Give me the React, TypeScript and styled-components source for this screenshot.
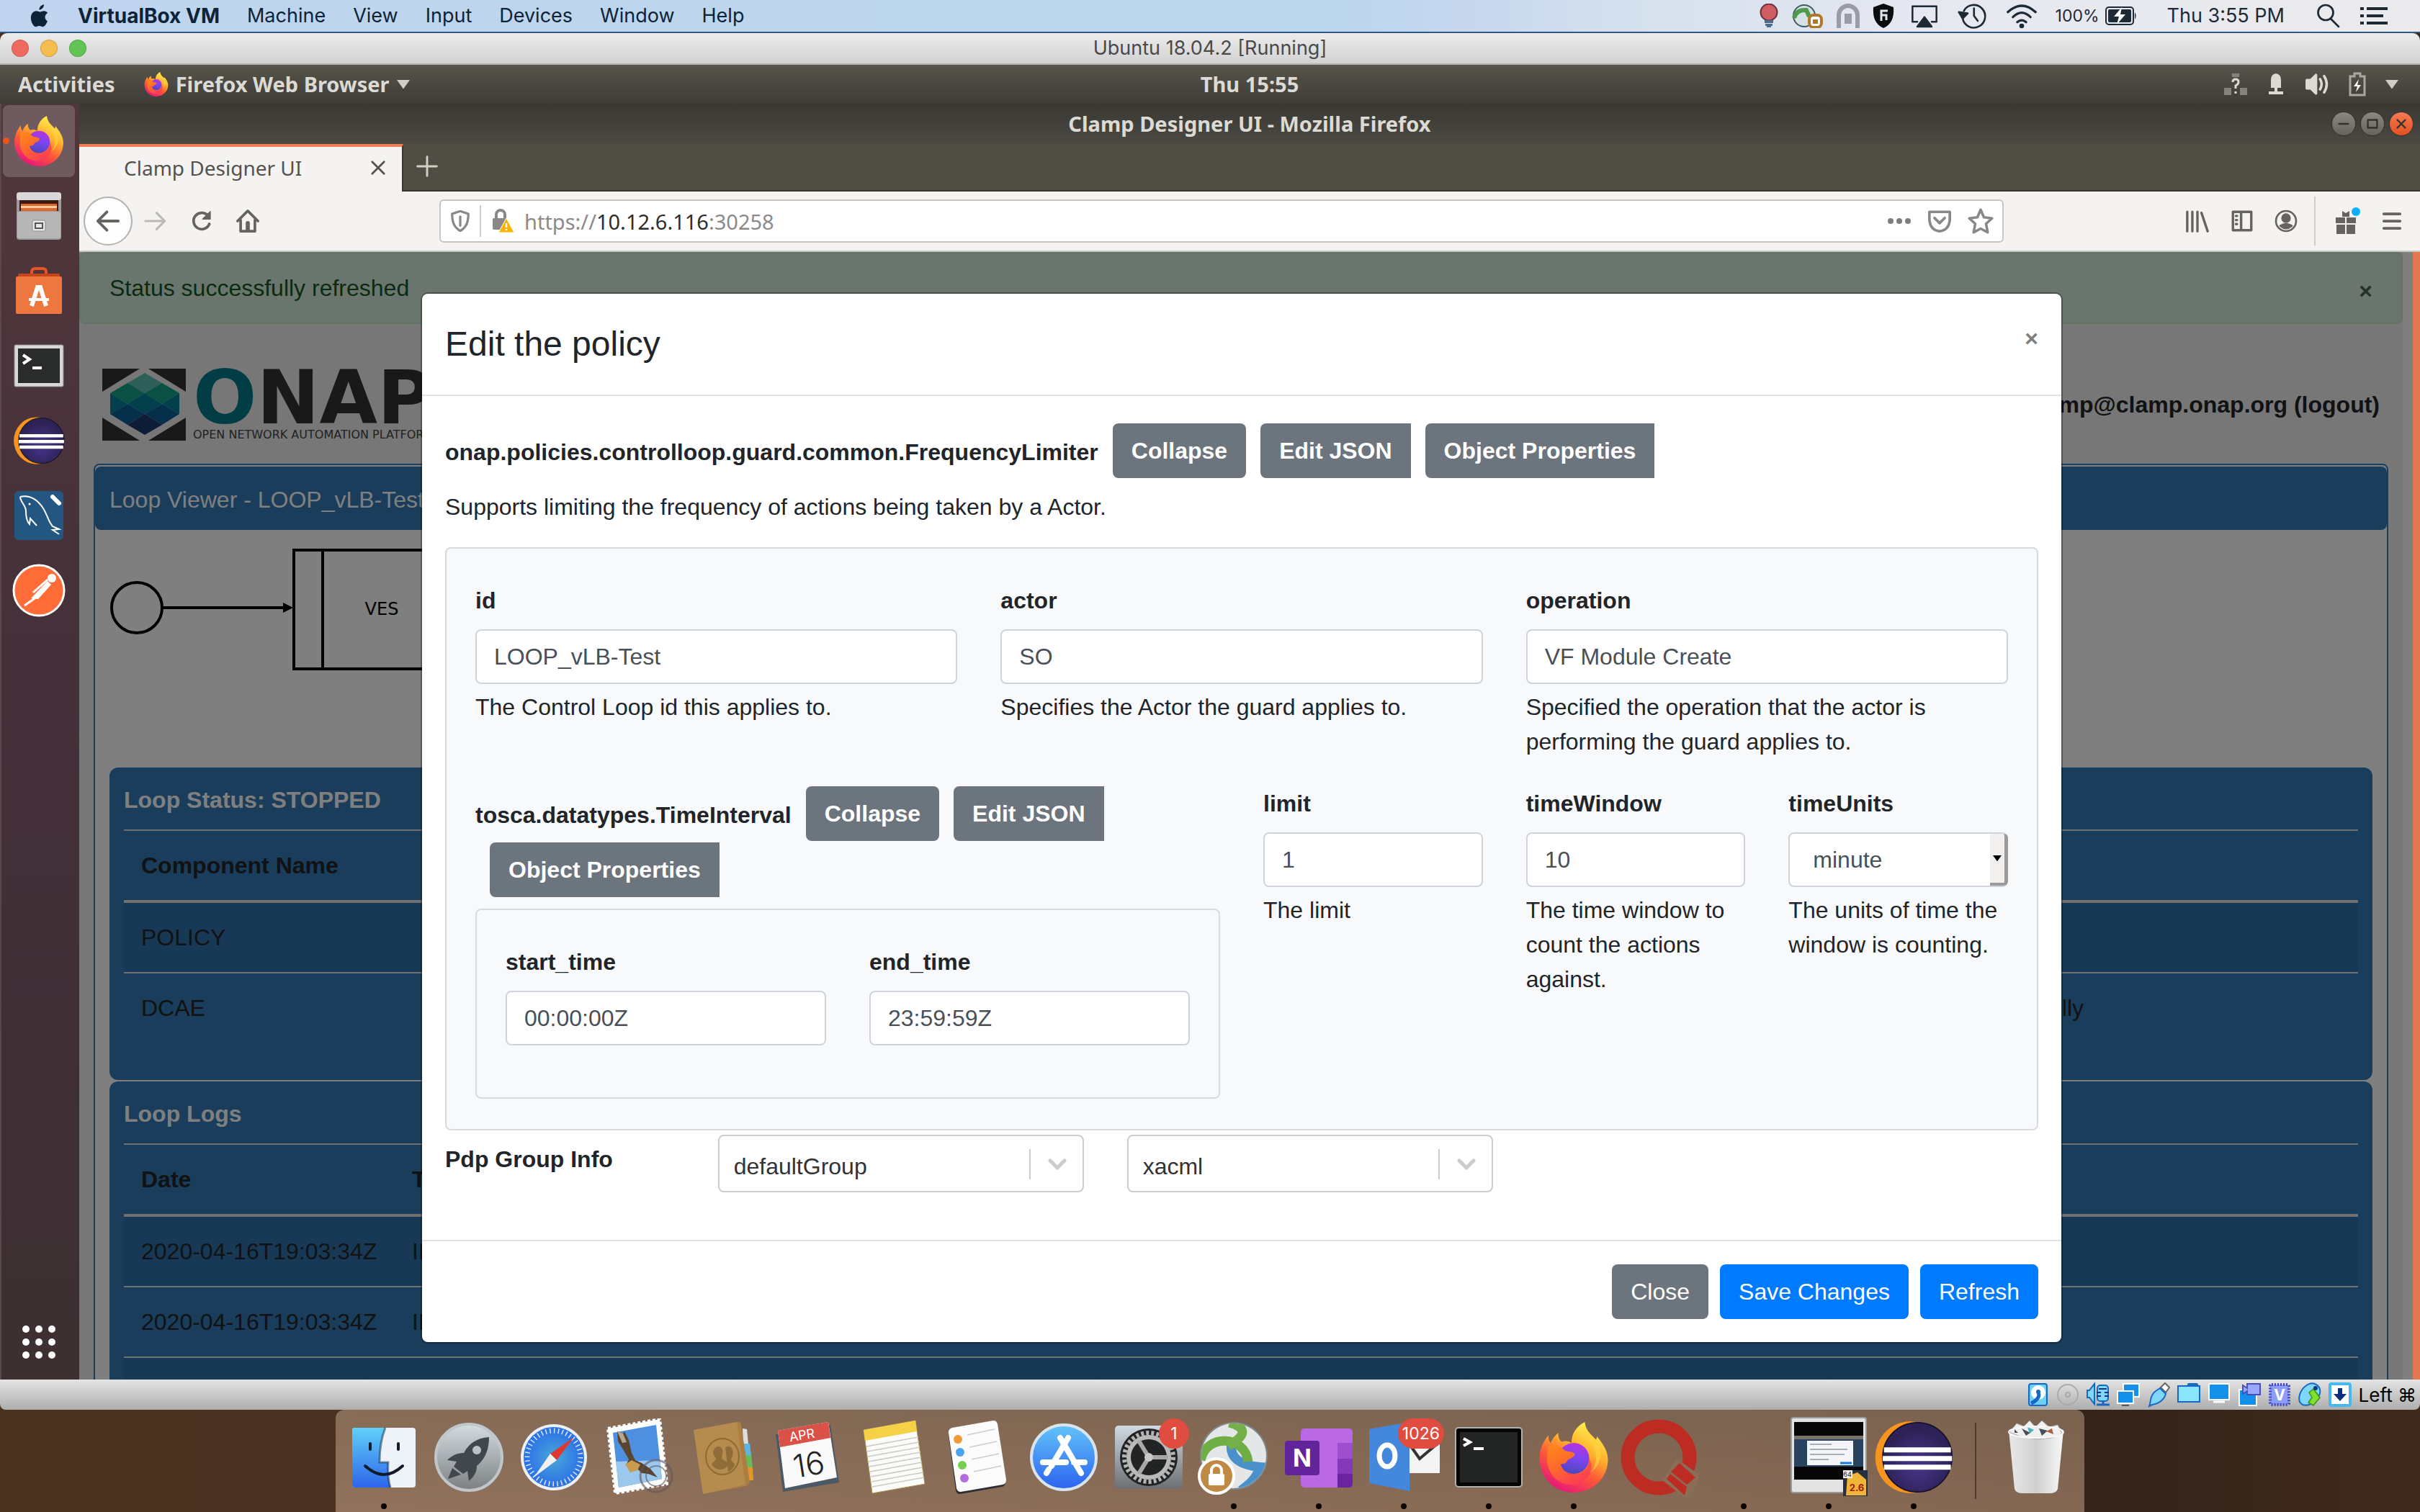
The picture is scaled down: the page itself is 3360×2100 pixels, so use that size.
import React from 'react';
import styled, { createGlobalStyle, css } from 'styled-components';

const ui = '"Liberation Sans", Arial, sans-serif';
const mac = 'Inter, Roboto, sans-serif';
const ubuntu = '"Noto Sans", "Open Sans", sans-serif';

const Global = createGlobalStyle`
  *, *::before, *::after { box-sizing: border-box; }
  body { margin: 0; background: #3a281b; }
  button, input, select { font: inherit; margin: 0; }
  svg { display: block; flex: none; }
`;

/* ---------- desktop ---------- */

const Desktop = styled.div`
  display: flex;
  flex-direction: column;
  height: 100vh;
  overflow: hidden;
  font-family: ${mac};
  background: linear-gradient(90deg, #49321f 0%, #4a3222 14%, #33231a 86%, #40291b 100%);
`;

const MenuBar = styled.header`
  display: flex;
  justify-content: space-between;
  align-items: center;
  flex: none;
  height: 46px;
  padding: 0 45px 0 40px;
  border-bottom: 2px solid #365685;
  background: linear-gradient(90deg, #c0d4ef 0%, #bdd6ec 30%, #bad6ee 55%, #c5d7ee 60%, #d6e1ee 68%, #e6e8f0 80%, #ebebed 100%);
  color: #0c2338;
  font-size: 27px;
  line-height: 40px;
`;

const MenuGroup = styled.nav`
  display: flex;
  align-items: center;
  gap: 38px;
`;

const MenuItem = styled.span<{ $bold?: boolean }>`
  font-size: ${p => (p.$bold ? 28 : 27)}px;
  font-weight: ${p => (p.$bold ? 700 : 400)};
`;

const TrayGroup = styled.div<{ $gap: number }>`
  display: flex;
  align-items: center;
  gap: ${p => p.$gap}px;
  color: #1d2a36;
`;

const Battery = styled.span`
  display: flex;
  align-items: center;
  gap: 8px;
  font-size: 23px;
`;

const VmWindow = styled.main`
  display: flex;
  flex-direction: column;
  flex: 1;
  min-height: 0;
  border-radius: 10px 10px 8px 8px;
  overflow: hidden;
`;

const VmTitle = styled.div`
  display: grid;
  grid-template-columns: 1fr auto 1fr;
  align-items: center;
  flex: none;
  height: 44px;
  padding: 0 16px;
  background: linear-gradient(#ececec, #d2d2d2);
  border-bottom: 2px solid #b2b4ae;
  color: #4a4a4a;
  font-size: 27px;
  line-height: 42px;
`;

const Lights = styled.div`
  display: flex;
  gap: 16px;
`;

const Light = styled.button<{ $c: string }>`
  width: 24px;
  height: 24px;
  padding: 0;
  border: 1px solid rgba(0, 0, 0, 0.15);
  border-radius: 50%;
  background: ${p => p.$c};
`;

const Guest = styled.div`
  display: flex;
  flex-direction: column;
  flex: 1;
  min-height: 0;
  font-family: ${ubuntu};
`;

const GnomeBar = styled.div`
  display: grid;
  grid-template-columns: 110px 1fr auto 1fr;
  align-items: center;
  flex: none;
  height: 54px;
  background: linear-gradient(#57544b, #3e3c37);
  color: #dcdad5;
  font-size: 29px;
  font-weight: 700;
  line-height: 36px;
`;

const GnomeLeft = styled.div`
  display: flex;
  align-items: center;
  grid-column: 1 / 3;
  gap: 40px;
  padding-left: 25px;
`;

const AppMenu = styled.div`
  display: flex;
  align-items: center;
  gap: 10px;
`;

const GnomeRight = styled.div`
  display: flex;
  align-items: center;
  justify-content: flex-end;
  gap: 26px;
  padding-right: 30px;
`;

const GuestBody = styled.div`
  display: flex;
  flex: 1;
  min-height: 0;
`;

const Launcher = styled.aside`
  display: flex;
  flex-direction: column;
  flex: none;
  width: 110px;
  background: linear-gradient(#50373b, #45303a 45%, #402f36 70%, #3c3031);
  border-left: 2px solid #5c484c;
`;

const LaunchItem = styled.button<{ $active?: boolean }>`
  display: flex;
  align-items: center;
  justify-content: center;
  position: relative;
  height: 100px;
  margin: 2px 6px 2px 2px;
  padding: 0;
  border: 0;
  border-radius: 8px;
  background: ${p => (p.$active ? '#6f5b5f' : 'transparent')};
  ${p =>
    p.$active &&
    css`
      &::before {
        content: '';
        position: absolute;
        left: 0;
        top: 45px;
        width: 9px;
        height: 9px;
        border-radius: 50%;
        background: #e95420;
      }
    `}
`;

const LaunchGrid = styled(LaunchItem)`
  margin-top: auto;
`;

/* ---------- firefox ---------- */

const Browser = styled.section`
  display: flex;
  flex-direction: column;
  flex: 1;
  min-width: 0;
`;

const BrowserTitle = styled.div`
  display: grid;
  grid-template-columns: 1fr auto 1fr;
  align-items: center;
  flex: none;
  height: 56px;
  background: linear-gradient(#3a3833, #4b4943);
  color: #dcdad2;
  font-size: 29px;
  font-weight: 700;
  line-height: 40px;
`;

const WinButtons = styled.div`
  grid-column: 3;
  display: flex;
  justify-content: flex-end;
  gap: 6px;
  padding-right: 9px;
`;

const WinButton = styled.button<{ $close?: boolean }>`
  display: flex;
  align-items: center;
  justify-content: center;
  width: 34px;
  height: 34px;
  padding: 0;
  border: 1px solid #33322d;
  border-radius: 50%;
  color: #33312c;
  background: ${p => (p.$close ? 'linear-gradient(#f37a54, #e4501f)' : 'linear-gradient(#8b887f, #65635c)')};
`;

const TabStrip = styled.div`
  display: flex;
  flex: none;
  height: 66px;
  background: #504d45;
  border-bottom: 2px solid #383631;
`;

const Tab = styled.div`
  display: flex;
  align-items: center;
  justify-content: space-between;
  width: 450px;
  height: 66px;
  padding: 0 22px 4px 62px;
  background: #f4f3f1;
  border-top: 4px solid #f07f55;
  border-right: 2px solid #383631;
  color: #55524e;
  font-size: 28px;
`;

const IconButton = styled.button`
  display: flex;
  align-items: center;
  justify-content: center;
  padding: 0;
  border: 0;
  background: none;
  color: inherit;
`;

const NewTab = styled(IconButton)`
  width: 66px;
  padding-bottom: 2px;
  color: #d4d0c8;
`;

const NavBar = styled.div`
  display: flex;
  align-items: center;
  flex: none;
  height: 84px;
  padding: 0 24px 0 6px;
  background: #f4f3f1;
  border-bottom: 2px solid #c9c5c1;
  color: #666461;
`;

const NavButtons = styled.div`
  display: flex;
  align-items: center;
  flex: none;
  width: 494px;
  gap: 31px;
`;

const BackButton = styled(IconButton)`
  width: 68px;
  height: 68px;
  margin-right: -16px;
  border: 2px solid #b5b2ae;
  border-radius: 50%;
  background: #fdfdfd;
`;

const UrlBar = styled.div`
  display: flex;
  align-items: center;
  flex: 1;
  height: 60px;
  padding: 0 12px;
  gap: 12px;
  border: 2px solid #c9c5c1;
  border-radius: 6px;
  background: #fff;
  color: #8a8886;
  font-size: 29px;
`;

const Split = styled.span<{ $h: number; $pull?: boolean }>`
  flex: none;
  width: 2px;
  height: ${p => p.$h}px;
  margin: ${p => (p.$pull ? '0 -5px' : '0')};
  background: #cfccc9;
`;

const Url = styled.span`
  flex: 1;
  color: #8c8a89;
  b {
    color: #2f2d2b;
    font-weight: 400;
  }
`;

const UrlActions = styled.span`
  display: flex;
  align-items: center;
  gap: 22px;
`;

const ToolButtons = styled.div`
  display: flex;
  align-items: center;
  justify-content: flex-end;
  flex: none;
  width: 554px;
  gap: 28px;
`;

const Content = styled.div`
  display: flex;
  position: relative;
  flex: 1;
  min-height: 0;
  overflow: hidden;
  font-family: ${ui};
  font-size: 32px;
  line-height: 48px;
  color: #212529;
`;

const ScrollTrack = styled.div`
  flex: none;
  width: 24px;
  background: #7f7f7f;
  border-right: 10px solid #e2784f;
`;

/* ---------- clamp page ---------- */

const Page = styled.div`
  flex: 1;
  min-width: 0;
  overflow: hidden;
  background: #eee;
`;

const Alert = styled.div`
  display: flex;
  justify-content: space-between;
  height: 100px;
  padding: 24px 40px;
  border: 2px solid #c3e6cb;
  border-radius: 8px;
  background: #d4edda;
  color: #155724;
`;

const CloseMark = styled.button`
  align-self: flex-start;
  padding: 0;
  border: 0;
  background: none;
  font-size: 32px;
  font-weight: 700;
  line-height: 56px;
  color: #7f7f7f;
`;

const AlertClose = styled(CloseMark)`
  color: #4c6452;
`;

const PageHead = styled.div`
  display: flex;
  align-items: center;
  justify-content: space-between;
  height: 194px;
  padding: 30px 32px 0;
`;

const Brand = styled.div`
  display: flex;
  align-items: center;
  gap: 10px;
`;

const WordMark = styled.div`
  font-family: "DejaVu Sans", sans-serif;
  font-size: 104px;
  font-weight: 700;
  line-height: 84px;
  color: #333;
  white-space: nowrap;
  span {
    color: #057b8c;
  }
  small {
    display: block;
    font-size: 16px;
    font-weight: 400;
    line-height: 20px;
    color: #444;
  }
`;

const User = styled.div`
  font-weight: 700;
  a {
    color: inherit;
    text-decoration: none;
  }
`;

const LoopCard = styled.div`
  margin: 0 20px;
  padding: 2px 0 0;
  border: 2px solid #337ab7;
  border-radius: 8px 8px 0 0;
  background: #fff;
`;

const LoopHead = styled.div`
  height: 88px;
  padding: 22px 20px;
  border-radius: 8px;
  background: #337ab7;
  color: #fff;
`;

const LoopSvg = styled.div`
  height: 330px;
`;

const Panel = styled.div`
  margin: 0 20px 2px;
  padding: 21px 20px 52px;
  border-radius: 12px;
  background: #337ab7;
`;

const PanelTitle = styled.div`
  padding-bottom: 17px;
  font-weight: 700;
  color: #fff;
`;

const Table = styled.table`
  width: 100%;
  border-collapse: separate;
  border-spacing: 0;
  border-top: 2px solid #dee2e6;
  text-align: left;
  th,
  td {
    padding: 24px;
    white-space: nowrap;
  }
  thead th {
    border-bottom: 4px solid #dee2e6;
  }
  tbody tr:nth-child(odd) {
    background: rgba(0, 0, 0, 0.06);
  }
  tbody tr + tr td {
    border-top: 2px solid #dee2e6;
  }
`;

const Col = styled.col<{ $w?: number }>`
  width: ${p => (p.$w ? p.$w + 'px' : 'auto')};
`;

const RightCell = styled.td`
  && {
    padding-right: 0;
    text-align: right;
  }
`;

/* ---------- modal ---------- */

const Backdrop = styled.div`
  position: absolute;
  inset: 0 24px 0 0;
  padding: 58px 0 0 2px;
  background: rgba(0, 0, 0, 0.5);
`;

const Modal = styled.div`
  width: 2276px;
  max-width: 71%;
  margin: 0 auto;
  border-radius: 8px;
  background: #fff;
  box-shadow: 0 0 0 2px rgba(0, 0, 0, 0.3);
`;

const ModalHead = styled.div`
  display: flex;
  justify-content: space-between;
  padding: 34px 32px;
  border-bottom: 2px solid #dee2e6;
`;

const ModalTitle = styled.h4`
  margin: 0;
  font-size: 48px;
  font-weight: 400;
  line-height: 72px;
`;

const ModalBody = styled.div`
  padding: 38px 32px 66px;
`;

const Legend = styled.div`
  display: flex;
  flex-wrap: wrap;
  align-items: center;
  row-gap: 2px;
`;

const LegendText = styled.span`
  padding-top: 4px;
  font-weight: 700;
`;

const Button = styled.button<{ $primary?: boolean }>`
  height: 76px;
  padding: 0 26px;
  border: 0;
  border-radius: 8px;
  background: ${p => (p.$primary ? '#007bff' : '#6c757d')};
  color: #fff;
  line-height: 48px;
`;

const EditorButton = styled(Button)<{ $square?: boolean }>`
  margin-left: 20px;
  font-weight: 700;
  border-radius: ${p => (p.$square ? '8px 0 0 8px' : '8px')};
`;

const Intro = styled.p`
  margin: 16px 0 32px;
`;

const Well = styled.div<{ $nested?: boolean }>`
  padding: ${p => (p.$nested ? '48px 40px 72px' : '48px 40px 42px')};
  margin-top: ${p => (p.$nested ? '16px' : '0')};
  border: 2px solid #d8dbde;
  border-radius: 8px;
  background: #f8f9fb;
`;

const Row = styled.div<{ $cols?: number }>`
  display: grid;
  grid-template-columns: repeat(${p => p.$cols || 12}, minmax(0, 1fr));
  column-gap: 60px;
  row-gap: 38px;
`;

const Cell = styled.div<{ $span: number }>`
  grid-column: span ${p => p.$span};
`;

const Label = styled.label`
  display: block;
  margin-bottom: 16px;
  font-weight: 700;
`;

const controlBox = css`
  display: block;
  width: 100%;
  height: 76px;
  padding: 0 24px;
  border: 2px solid #ced4da;
  border-radius: 8px;
  background: #fff;
  color: #495057;
`;

const Input = styled.input`
  ${controlBox}
`;

const Help = styled.p`
  margin: 8px 0 0;
`;

const UnitWrap = styled.div`
  position: relative;
`;

const UnitSelect = styled.select`
  ${controlBox}
  padding: 0 32px;
  appearance: none;
`;

const UnitArrow = styled.span`
  display: flex;
  align-items: center;
  justify-content: center;
  position: absolute;
  top: 2px;
  right: 0;
  bottom: 2px;
  width: 25px;
  border-right: 5px solid #9b9a99;
  border-bottom: 4px solid #9b9a99;
  border-radius: 0 6px 6px 0;
  background: #f1f0ef;
  pointer-events: none;
`;

const GroupRow = styled(Row)`
  padding-top: 6px;
`;

const GroupLabel = styled(Label)`
  padding-top: 10px;
`;

const GroupWrap = styled.div`
  position: relative;
`;

const GroupSelect = styled.select`
  display: block;
  width: 100%;
  height: 80px;
  padding: 8px 20px 0;
  border: 2px solid #ccc;
  border-radius: 8px;
  background: #fff;
  color: #333;
  appearance: none;
`;

const GroupArrow = styled.span`
  display: flex;
  align-items: center;
  position: absolute;
  top: 20px;
  right: 22px;
  height: 42px;
  padding-left: 22px;
  border-left: 2px solid #ccc;
  color: #ccc;
  pointer-events: none;
`;

const ModalFoot = styled.div`
  display: flex;
  justify-content: flex-end;
  gap: 16px;
  padding: 32px;
  border-top: 2px solid #dee2e6;
`;

/* ---------- status bar and dock ---------- */

const StatusBar = styled.div`
  display: flex;
  align-items: center;
  justify-content: flex-end;
  flex: none;
  gap: 10px;
  height: 42px;
  padding-right: 5px;
  background: linear-gradient(#e4e4e4, #adadad);
  color: #000;
  font-size: 26px;
  font-family: Inter, "DejaVu Sans", sans-serif;
`;

const DockArea = styled.footer`
  display: flex;
  justify-content: center;
  flex: none;
  height: 142px;
`;

const Dock = styled.div`
  display: flex;
  height: 142px;
  padding: 0 8px;
  border-radius: 12px 12px 0 0;
  background: linear-gradient(90deg, rgba(150, 120, 95, 0.16), rgba(0, 0, 0, 0.08)), linear-gradient(#846a55, #90705a);
`;

const DockItem = styled.div<{ $running?: boolean }>`
  display: flex;
  align-items: center;
  justify-content: center;
  position: relative;
  width: 118px;
  padding-bottom: 10px;
  ${p =>
    p.$running &&
    css`
      &::after {
        content: '';
        position: absolute;
        left: 55px;
        bottom: 4px;
        width: 8px;
        height: 8px;
        border-radius: 50%;
        background: #0b0604;
      }
    `}
`;

const DockSplit = styled.span`
  width: 2px;
  height: 106px;
  margin: 18px 24px 0 26px;
  background: #513a28;
`;

const Badge = styled.span`
  position: absolute;
  top: 12px;
  right: 3px;
  min-width: 42px;
  height: 42px;
  padding: 0 6px;
  border-radius: 21px;
  background: #e04c3f;
  color: #fff;
  font-size: 23px;
  line-height: 42px;
  text-align: center;
`;

/* ---------- drawings ---------- */

const Firefox = ({ s, id }: { s: number; id: string }) => (
  <svg width={s} height={s} viewBox="0 0 64 64">
    <defs>
      <linearGradient id={id + 'a'} x1="0.8" y1="0.05" x2="0.3" y2="1">
        <stop offset="0" stopColor="#fff44f" />
        <stop offset="0.35" stopColor="#ffb02e" />
        <stop offset="0.62" stopColor="#ff5a36" />
        <stop offset="1" stopColor="#e5147d" />
      </linearGradient>
      <linearGradient id={id + 'b'} x1="0.6" y1="0" x2="0.4" y2="1">
        <stop offset="0" stopColor="#b833e1" />
        <stop offset="0.5" stopColor="#7b45f0" />
        <stop offset="1" stopColor="#4a47b8" />
      </linearGradient>
      <linearGradient id={id + 'c'} x1="0" y1="0" x2="0.6" y2="1">
        <stop offset="0" stopColor="#ff8a1a" />
        <stop offset="0.5" stopColor="#ff6a2c" />
        <stop offset="1" stopColor="#fb3e53" />
      </linearGradient>
    </defs>
    <path fill={`url(#${id}a)`} d="M63 34C63 51 49 64 32 64S1 51 1 33c0-8 3-15 8-21 0 3 1 6 2 7 2-4 4-7 7-9 0 4 1 6 3 8 3-1 6-1 9 1 0-8 4-15 12-19 1 8 6 12 10 16 1-1 1-2 1-3 5 6 10 13 10 21z" />
    <circle cx="32" cy="33" r="14" fill={`url(#${id}b)`} />
    <path fill={`url(#${id}c)`} d="M9 22c5-2 11-1 15 4 3 1 8 1 9 3 0 3-5 4-7 6-1 3-3 3-6 3 2 7 8 11 14 10 7-1 12-7 12-15 6 11-3 24-16 24-12 0-20-9-22-20 0-5 0-11 1-15z" />
    <path fill="#ffd23e" opacity="0.7" d="M42 3c0 10 9 15 10 26 1 7-1 13-5 17 10-7 12-19 6-29-4-5-9-8-11-14z" />
  </svg>
);

const Eclipse = ({ s, id }: { s: number; id: string }) => (
  <svg width={s} height={s} viewBox="0 0 64 64">
    <defs>
      <radialGradient id={id} cx="0.5" cy="0.6" r="0.5">
        <stop offset="0.3" stopColor="#40307e" />
        <stop offset="1" stopColor="#2c2255" />
      </radialGradient>
    </defs>
    <ellipse cx="29" cy="32" rx="28" ry="29" fill="#f7941e" />
    <ellipse cx="35" cy="32" rx="28" ry="28" fill={`url(#${id})`} stroke="#161029" />
    <path fill="#fff" d="M8 24h54v4H8zM7 31h56v4H7zM8 38h54v4H8z" />
  </svg>
);

const Files = () => (
  <svg width="68" height="68" viewBox="0 0 68 68">
    <rect x="3" y="1" width="62" height="66" rx="4" fill="#9b9b9b" />
    <rect x="3" y="1" width="62" height="11" rx="4" fill="#d9d9d9" />
    <rect x="7" y="12" width="54" height="15" fill="#3a1b12" />
    <path fill="#e0662f" d="M9 17h50v10H9z" />
    <path fill="#f6cf9d" d="M9 20h50v3H9z" />
    <rect x="4" y="28" width="60" height="37" rx="2" fill="#b7b7b7" />
    <rect x="25" y="40" width="18" height="15" rx="2" fill="#e8e8e8" stroke="#8a8a8a" />
    <rect x="29" y="44" width="10" height="7" fill="none" stroke="#555" strokeWidth="2" />
  </svg>
);

const Software = () => (
  <svg width="68" height="68" viewBox="0 0 68 68">
    <path fill="none" stroke="#e95420" strokeWidth="4" d="M24 18V8q0-5 5-5h10q5 0 5 5v10" />
    <rect x="5" y="10" width="58" height="10" rx="2" fill="#c8451b" />
    <rect x="2" y="14" width="64" height="52" rx="2" fill="#ee7740" />
    <path fill="none" stroke="#fff" strokeWidth="6" d="M24 55l8-26h4l8 26" />
    <path stroke="#fff" strokeWidth="4" d="M20 46h28" />
  </svg>
);

const UbuntuTerm = () => (
  <svg width="70" height="60" viewBox="0 0 70 60">
    <rect x="1" y="1" width="68" height="58" rx="2" fill="#d7d7d7" stroke="#8a8a8a" />
    <rect x="6" y="6" width="58" height="48" fill="#2a2c2b" />
    <path d="M13 15l9 6-9 6M26 33h13" fill="none" stroke="#fff" strokeWidth="4" />
  </svg>
);

const Mysql = () => (
  <svg width="70" height="70" viewBox="0 0 70 70">
    <rect x="1" y="1" width="68" height="68" rx="6" fill="#235782" />
    <path fill="none" stroke="#fff" strokeWidth="2" d="M9 9c14-3 24 4 32 16 6 10 7 18 13 25l9 4-9 1 9 6M9 9c0 7 8 12 8 20 0 7 1 14 5 18l1-8 9 10" />
    <path stroke="#fff" strokeWidth="6" strokeLinecap="round" d="M54 9l9 9" />
    <circle cx="22" cy="19" r="1.500" fill="#fff" />
  </svg>
);

const Postman = () => (
  <svg width="74" height="74" viewBox="0 0 74 74">
    <circle cx="37" cy="37" r="35" fill="#ff6c37" stroke="#fff" strokeWidth="3" />
    <circle cx="55" cy="20" r="6" fill="#fff" />
    <path fill="#fff" d="M49 24l5 5-18 20-10-1z" />
    <path stroke="#fff" strokeWidth="3" d="M34 46L17 58M29 40l20-18" />
  </svg>
);

const AppGrid = () => (
  <svg width="48" height="48" viewBox="0 0 48 48" fill="#fff">
    {[6, 24, 42].map(y => [6, 24, 42].map(x => <circle key={x + '-' + y} cx={x} cy={y} r="5" />))}
  </svg>
);

const Apple = () => (
  <svg width="30" height="34" viewBox="0 0 24 28" fill="#0c2338">
    <path d="M17 1c0 3-2.500 6-5.500 6C11.500 4 14 1.500 17 1zM21 20c-1.500 4-3.500 6.500-5.500 6.500-1.500 0-2-1-4-1s-2.500 1-4 1C5 26.500 2 21 2 16.500 2 11.500 5 8.500 8.200 8.500c1.800 0 2.800 1 4.300 1s2.500-1 4.500-1c1.600 0 3.200.800 4.200 2.300-4.300 2.500-3.500 7.700-.200 9.200z" />
  </svg>
);

const Onap = () => (
  <svg width="116" height="100" viewBox="0 0 116 100">
    <path fill="#333" d="M0 0h52L0 32zM64 0h52v32zM0 100V68l52 32zM116 100V68l-52 32z" />
    <path fill="#5cc0b3" d="M59 6l24 14-24 14-24-14z" />
    <path fill="#16a08a" d="M35 20l24 14-24 15-24-15zM83 20l24 14-24 15-24-15z" />
    <path fill="#088196" d="M11 34l24 15-24 14zM107 34v29L83 49zM59 34l24 15-24 14-24-14z" />
    <path fill="#0b5f97" d="M35 49l24 14-24 15-24-15zM83 49l24 14-24 15-24-15z" />
    <path fill="#1a3a6e" d="M59 63l24 15-24 14-24-14z" />
  </svg>
);

const LoopDiagram = () => (
  <svg width="760" height="330" viewBox="0 0 760 330" fill="none" stroke="#000" strokeWidth="4">
    <circle cx="58" cy="108" r="35" />
    <path d="M93 108h170M276 28h480v165H276zM316 28v165" />
    <path fill="#000" stroke="none" d="M261 101l14 7-14 7z" />
    <text x="398" y="118" textAnchor="middle" fill="#000" stroke="none" fontFamily="DejaVu Sans, sans-serif" fontSize="24">VES</text>
  </svg>
);

/* Line glyphs drawn on a 24 unit grid in the current colour */
const Glyph = ({ s = 32, w = 2, d, children }: { s?: number; w?: number; d?: string; children?: React.ReactNode }) => (
  <svg width={s} height={s} viewBox="0 0 24 24" fill="none" stroke="currentColor" strokeWidth={w} strokeLinecap="round" strokeLinejoin="round">
    {d && <path d={d} />}
    {children}
  </svg>
);

const Caret = ({ w, c }: { w: number; c: string }) => (
  <svg width={w} height={w * 0.7} viewBox="0 0 10 7"><path d="M0 0h10L5 7z" fill={c} /></svg>
);

const Tray = () => (
  <>
    <svg width="28" height="34" viewBox="0 0 28 34"><circle cx="14" cy="12" r="11.500" fill="#cf5d61" stroke="#6a3244" strokeWidth="2" /><path fill="#4d6d8f" d="M8 23h12v4H8zM9 28h10v3H9zM11 31h6v2h-6z" /></svg>
    <svg width="44" height="34" viewBox="0 0 44 34"><circle cx="17" cy="17" r="15" fill="#d6e1e4" stroke="#44585f" strokeWidth="2" /><path d="M3 20Q6 8 20 9l4 9" fill="none" stroke="#4f9a4c" strokeWidth="6" /><rect x="24" y="16" width="17" height="17" rx="6" fill="#fff" stroke="#b07728" strokeWidth="4" /><path d="M29 22h7v6h-7z" fill="#b07728" /></svg>
    <svg width="32" height="34" viewBox="0 0 32 34" fill="none" stroke="#999ca4" strokeWidth="6"><path d="M3 34V16a13 13 0 0 1 26 0v18" /><path d="M16 14v14" strokeWidth="10" /></svg>
    <svg width="30" height="34" viewBox="0 0 30 34"><path d="M15 0l14 5c1 15-3 24-14 29C4 29 0 20 1 5z" fill="#0a0d10" /><path d="M21 10h-9v14M12 16h7v7" fill="none" stroke="#dfe3ec" strokeWidth="3" /></svg>
  </>
);

const StatusIcons = () => {
  const sky = '#7fd8fb';
  const edge = '#1668c4';
  return (
    <>
      <svg width="32" height="36" viewBox="0 0 32 36"><rect x="4" y="3" width="25" height="30" rx="3" fill="#6fd0f5" stroke={edge} strokeWidth="2" /><circle cx="17" cy="15" r="10" fill="#fff" /><path d="M17 15c3 6-3 12-10 15" fill="none" stroke={edge} strokeWidth="5" /><circle cx="17" cy="14" r="3" fill={edge} /></svg>
      <svg width="32" height="36" viewBox="0 0 32 36" fill="none" stroke="#aaa" strokeWidth="2"><circle cx="16" cy="18" r="14" /><circle cx="16" cy="18" r="3" /></svg>
      <svg width="32" height="36" viewBox="0 0 32 36"><path d="M1 12h3l7-9v28l-7-9H1z" fill={sky} stroke={edge} strokeWidth="2" /><rect x="15" y="5" width="15" height="22" rx="4" fill={sky} stroke={edge} strokeWidth="2" /><path d="M17 10h11M14 15h6M25 15h6M14 20h6M25 20h6" stroke="#0b3b7d" strokeWidth="2" /><path d="M14 32h18M23 27v5" stroke={edge} strokeWidth="3" /></svg>
      <svg width="32" height="36" viewBox="0 0 32 36" fill="#1590ea" stroke="#fff" strokeWidth="2"><path d="M9 3h22v18H9z" /><path d="M1 13h22v17H1z" /><path d="M7 33h10" stroke="#555" /></svg>
      <svg width="32" height="36" viewBox="0 0 32 36"><path d="M19 8l6-6 6 6-5 7z" fill="#fff" stroke="#666" strokeWidth="2" /><path d="M4 31c1-9 3-15 8-18l6-4 8 8c-2 7-8 13-19 15l-4 2z" fill={sky} stroke={edge} strokeWidth="2" /></svg>
      <svg width="32" height="36" viewBox="0 0 32 36"><path d="M13 6l2-4h13l2 4z" fill={edge} /><path d="M1 6h30v22H1z" fill="#8be4fd" stroke={edge} strokeWidth="2" /></svg>
      <svg width="32" height="36" viewBox="0 0 32 36"><path d="M2 3h28v22H2z" fill="#1590ea" stroke="#fff" strokeWidth="2" /><path d="M8 28h16" stroke="#fff" strokeWidth="3" /></svg>
      <svg width="32" height="36" viewBox="0 0 32 36"><path d="M2 11h24v22H2z" fill="#1590ea" stroke="#fff" strokeWidth="2" /><path d="M7 5l6 4V3h18v15H13v-5l-6 4z" fill="#98a8ff" stroke="#4a4dc0" strokeWidth="2" /></svg>
      <svg width="32" height="36" viewBox="0 0 32 36"><rect x="3" y="4" width="26" height="28" rx="2" fill="#8c9cf8" stroke="#4248c0" strokeWidth="4" strokeDasharray="2 2" /><text x="16" y="26" textAnchor="middle" fontFamily="Inter, sans-serif" fontSize="21" fontWeight="700" fill="#fff">V</text></svg>
      <svg width="32" height="36" viewBox="0 0 32 36"><path d="M13 4c9-5 19 2 17 12S16 35 6 32C-2 28 0 12 13 4z" fill={sky} stroke={edge} strokeWidth="2" /><path d="M15 15l6-5 9 12-9 11-7-4 5-7z" fill="#7fe02c" stroke="#3f8f18" strokeWidth="1.500" /><circle cx="24" cy="9" r="3" fill="#0b3b7d" /></svg>
      <svg width="32" height="36" viewBox="0 0 32 36"><rect x="2" y="3" width="28" height="30" rx="2" fill="#fff" stroke="#49b8ee" strokeWidth="4" /><path d="M13 9h6v8h6l-9 10-9-10h6z" fill="#0b2f7c" /></svg>
    </>
  );
};

const Finder = () => (
  <svg width="96" height="96" viewBox="0 0 96 96">
    <defs><linearGradient id="fd" x1="0" y1="0" x2="0" y2="1"><stop offset="0" stopColor="#5fd0f9" /><stop offset="1" stopColor="#2d66ea" /></linearGradient></defs>
    <rect x="4" y="7" width="88" height="83" rx="4" fill="#eef3fa" />
    <path fill="url(#fd)" d="M8 7h42c-6 15-8 30-8 48h12c-1 12 0 24 3 35H8q-4 0-4-4V11q0-4 4-4z" />
    <path fill="none" stroke="#0f2740" strokeWidth="3" d="M50 7c-6 15-8 30-8 48h12c-1 12 0 24 3 35" opacity="0.5" />
    <path fill="none" stroke="#111c2b" strokeWidth="4" strokeLinecap="round" d="M29 29v8M68 29v8M22 60q26 24 52 0" />
  </svg>
);

const Launchpad = () => (
  <svg width="96" height="96" viewBox="0 0 96 96">
    <defs><linearGradient id="lp" x1="0" y1="0" x2="0" y2="1"><stop offset="0" stopColor="#d5dde0" /><stop offset="1" stopColor="#7b7f82" /></linearGradient></defs>
    <circle cx="48" cy="48" r="46" fill="url(#lp)" stroke="#bfc7cc" strokeWidth="4" />
    <path fill="#42474d" d="M76 20c-17 1-28 9-35 22-10 0-17 4-23 10l13 2-4 7 13 10 6-4 2 14c7-6 11-12 11-21 12-10 17-23 17-40z" />
    <circle cx="59" cy="38" r="6" fill="#bcc3c7" />
    <path fill="#42474d" d="M25 63l12 9-18 6z" />
  </svg>
);

const Safari = () => (
  <svg width="96" height="96" viewBox="0 0 96 96">
    <defs><radialGradient id="sf"><stop offset="0" stopColor="#49a7d8" /><stop offset="1" stopColor="#2a6ee8" /></radialGradient></defs>
    <circle cx="48" cy="48" r="46" fill="#eef1f4" />
    <circle cx="48" cy="48" r="42" fill="url(#sf)" />
    <circle cx="48" cy="48" r="37" fill="none" stroke="#dbe9f8" strokeWidth="7" strokeDasharray="1.500 4.300" />
    <path fill="#e0382e" d="M76 20L43 43l9 9z" />
    <path fill="#f0f0f0" d="M20 76l23-33 9 9z" />
  </svg>
);

const Mail = () => (
  <svg width="104" height="108" viewBox="0 0 104 108">
    <path d="M9 14l72-13 10 90-72 13z" fill="#fff" stroke="#fff" strokeWidth="4" strokeDasharray="4 3" />
    <path d="M16 20l60-11 8 75-60 12z" fill="#4f8fe0" />
    <path d="M20 60l61-2 3 26-60 12z" fill="#9cc8ee" />
    <path d="M22 18l8 3 2-3 6 12 4 18 5 10 9 4 12 8 10 12-13-5-9-1-7-7-6 3-9-7 4-8-8-14-7-11z" fill="#5a4630" />
    <path d="M33 64l9-6 12 6-4 8-10 3z" fill="#c79b50" />
    <path d="M22 18l8 3 5 12-6 1z" fill="#b7a78d" />
    <circle cx="76" cy="80" r="22" fill="none" stroke="#5c5560" strokeWidth="3" opacity="0.6" />
    <circle cx="76" cy="80" r="14" fill="none" stroke="#5c5560" strokeWidth="2" opacity="0.6" />
  </svg>
);

const Contacts = () => (
  <svg width="96" height="104" viewBox="0 0 96 104">
    <path d="M74 12l6 1 2 20h-7z" fill="#ddd" /><path d="M76 33h8l2 16h-8z" fill="#5bb6e3" /><path d="M78 49h8l2 17h-9z" fill="#67bb58" /><path d="M79 66h9l1 18h-8z" fill="#e3962b" />
    <path d="M6 14L66 3q5-1 6 4l12 80-5 5-60 11z" fill="#ab7f41" />
    <path d="M6 14l60-11 12 87-59 13z" fill="#b58c4d" />
    <ellipse cx="46" cy="51" rx="23" ry="25" fill="none" stroke="#8d6a32" strokeWidth="2" />
    <path d="M36 39c8-6 13 3 9 13 0 5 8 5 10 9-6 11-18 10-24 1 2-5 6-4 6-9-5-5-5-10-1-14z" fill="#8f6c38" />
    <path d="M50 38c9-5 14 6 8 17 1 4 5 4 5 8-5 9-9 9-9 9z" fill="#8f6c38" />
  </svg>
);

const Calendar = () => (
  <svg width="96" height="104" viewBox="0 0 96 104">
    <path d="M2 20L78 7l12 80-78 13z" fill="#4b5966" />
    <path d="M5 15L75 3l12 77-72 15z" fill="#fafafa" />
    <path d="M5 15L75 3l3 22L8 38z" fill="#da5148" />
    <g transform="rotate(-9 44 50)" textAnchor="middle" fontFamily="Inter, sans-serif">
      <text x="43" y="27" fontSize="18" fill="#fff">APR</text>
      <text x="46" y="78" fontSize="44" fontWeight="300" fill="#222">16</text>
    </g>
  </svg>
);

const Notes = () => (
  <svg width="92" height="104" viewBox="0 0 92 104">
    <path d="M4 14L76 1l13 88-73 13z" fill="#fbfbf9" stroke="#a89448" />
    <path d="M4 14L76 1l2 15L6 29z" fill="#f6d147" />
    {[0, 1, 2, 3, 4, 5, 6, 7, 8].map(i => <path key={i} d={`M${8 + i} ${37 + i * 7}l72-13`} stroke="#c9c9c7" strokeWidth="1.500" />)}
  </svg>
);

const Reminders = () => (
  <svg width="92" height="104" viewBox="0 0 92 104">
    <path d="M4 22q-1-6 5-8L64 2q6-1 7 4l12 80q0 6-5 7l-58 10q-5 0-6-5z" fill="#2b2f35" />
    <path d="M4 19q-1-6 5-8L66 1q5 0 6 5l12 77q0 6-5 7l-58 10q-5 0-6-5z" fill="#fbfbfb" />
    {['#f19a38', '#4aa5ee', '#76cf52', '#b56be0'].map((c, i) => (
      <g key={c}><circle cx={17 + i * 3} cy={27 + i * 18} r="6" fill={c} /><path d={`M${30 + i * 3} ${21 + i * 17}l38-8`} stroke="#ccc" strokeWidth="1.500" /></g>
    ))}
  </svg>
);

const AppStore = () => (
  <svg width="96" height="96" viewBox="0 0 96 96">
    <defs><linearGradient id="as" x1="0" y1="0" x2="0" y2="1"><stop offset="0" stopColor="#62c4fa" /><stop offset="1" stopColor="#2b62ee" /></linearGradient></defs>
    <circle cx="48" cy="48" r="45" fill="url(#as)" stroke="#d9e4ee" strokeWidth="4" />
    <path d="M43 21l29 49M54 21L31 60M19 55h32M62 55h15M27 65l-3 5" stroke="#fff" strokeWidth="8" strokeLinecap="round" />
  </svg>
);

const Prefs = () => (
  <svg width="96" height="96" viewBox="0 0 96 96">
    <defs><linearGradient id="pr" x1="0" y1="0" x2="0" y2="1"><stop offset="0" stopColor="#d0dae2" /><stop offset="1" stopColor="#6c6e72" /></linearGradient></defs>
    <rect x="1" y="4" width="94" height="88" rx="5" fill="url(#pr)" />
    <circle cx="48" cy="48" r="40" fill="#222325" />
    <circle cx="48" cy="48" r="34" fill="none" stroke="#b5b5b5" strokeWidth="6" strokeDasharray="4 3.100" />
    <circle cx="48" cy="48" r="28" fill="none" stroke="#b9b9b9" strokeWidth="6" />
    <path d="M48 48h27M48 48L34 25M48 48L34 71" stroke="#a8a8a8" strokeWidth="6" />
    <circle cx="48" cy="48" r="6" fill="#c9c9c9" />
  </svg>
);

const AnyConnect = () => (
  <svg width="108" height="104" viewBox="0 0 108 104">
    <defs><clipPath id="ac"><circle cx="54" cy="50" r="45" /></clipPath></defs>
    <circle cx="54" cy="50" r="47" fill="#7f8a8c" />
    <circle cx="54" cy="50" r="45" fill="#e4e6e7" />
    <g clipPath="url(#ac)" fill="none">
      <path d="M52 28c-6 20 4 38 52 38M90 66c-4 14-12 22-26 32" stroke="#4a90cb" strokeWidth="13" />
      <path d="M8 56C16 18 70 22 74 58" stroke="#6fae45" strokeWidth="13" />
      <path d="M48 4c28 8 20 20-2 32" stroke="#74b04a" strokeWidth="13" />
    </g>
    <circle cx="30" cy="78" r="24" fill="#c08a45" stroke="#fff" strokeWidth="4" />
    <rect x="19" y="75" width="22" height="16" rx="2" fill="#fff" />
    <path d="M23 75v-5a7 7 0 0 1 14 0v5" fill="none" stroke="#fff" strokeWidth="4" />
  </svg>
);

const OneNote = () => (
  <svg width="96" height="96" viewBox="0 0 96 96">
    <rect x="23" y="8" width="72" height="82" rx="5" fill="#ba68e4" />
    <path fill="#9e4fd0" d="M74 28h21v22H74z" /><path fill="#8638bd" d="M74 50h21v21H74z" /><path fill="#6a24a0" d="M74 71h21v14q0 5-5 5H74z" />
    <rect x="1" y="25" width="48" height="48" rx="4" fill="#62249a" />
    <text x="25" y="61" textAnchor="middle" fontFamily="Inter, sans-serif" fontSize="34" fontWeight="700" fill="#fff">N</text>
  </svg>
);

const Outlook = () => (
  <svg width="104" height="104" viewBox="0 0 104 104">
    <rect x="58" y="32" width="44" height="42" fill="#f4f4f4" /><path d="M60 34l14 20 26-22" fill="none" stroke="#333" strokeWidth="4" />
    <path d="M4 13l56-10v96L4 88z" fill="#4488dd" />
    <ellipse cx="29" cy="50" rx="11" ry="15" fill="none" stroke="#fff" strokeWidth="7" />
  </svg>
);

const MacTerm = () => (
  <svg width="96" height="96" viewBox="0 0 96 96">
    <rect x="2" y="7" width="92" height="82" rx="4" fill="#050505" stroke="#aeb2b2" strokeWidth="2" />
    <rect x="8" y="13" width="80" height="70" fill="#232424" />
    <path d="M13 22l9 5-9 5M27 36h14" fill="none" stroke="#fff" strokeWidth="4" />
  </svg>
);

const Quick = () => (
  <svg width="110" height="112" viewBox="0 0 110 112">
    <circle cx="55" cy="56" r="43" fill="none" stroke="#bd2c22" strokeWidth="19" />
    <path d="M60 88l20-30 34 24-18 34z" fill="#8a6d56" />
    <path d="M72 76l12-12 22 20-12 10zM66 86l5-7 23 18-3 12z" fill="#bd2c22" />
  </svg>
);

const VBox = () => (
  <svg width="108" height="112" viewBox="0 0 108 112">
    <rect x="2" y="1" width="104" height="104" rx="3" fill="#e3e3e3" stroke="#9b9b9b" strokeWidth="2" />
    <rect x="6" y="7" width="96" height="80" fill="#060606" />
    <rect x="6" y="26" width="96" height="43" fill="#27435f" /><rect x="6" y="26" width="96" height="5" fill="#77736d" />
    <rect x="24" y="33" width="64" height="34" fill="#f3f5f8" /><path d="M28 38h30M28 45h52M28 52h48M28 59h26" stroke="#a9aeb5" strokeWidth="2" /><path d="M70 64h16" stroke="#1677e8" strokeWidth="3" />
    <rect x="74" y="74" width="34" height="36" fill="#282f3e" /><path d="M80 82l14-5 12 10v22H78z" fill="#f0b437" />
    <text x="93" y="103" textAnchor="middle" fontFamily="Inter, sans-serif" fontSize="13" fontWeight="700" fill="#a01f10">2.6</text>
    <rect x="74" y="74" width="13" height="11" fill="#eee" /><text x="80" y="83" textAnchor="middle" fontFamily="Inter, sans-serif" fontSize="9" fill="#222">64</text>
  </svg>
);

const Trash = () => (
  <svg width="84" height="104" viewBox="0 0 84 104">
    <defs><linearGradient id="tr" x1="0" y1="0" x2="1" y2="0"><stop offset="0" stopColor="#e9e9e9" /><stop offset="0.5" stopColor="#cfcfce" /><stop offset="1" stopColor="#f8f8f8" /></linearGradient></defs>
    <path d="M4 14h76l-8 82q-2 6-12 6H24q-10 0-12-6z" fill="url(#tr)" />
    <path d="M5 17l10-12 10 4 8-8 8 9 9-9 10 9 12-3 6 12-14 6-20 2-22-3z" fill="#efefef" stroke="#a5a5a5" />
    <path d="M22 12l12 6-6 4zM46 12l12 3-8 7zM12 13l5 5h-5z" fill="#4a4e58" /><path d="M30 10l9 4-6 5z" fill="#45b0c0" /><path d="M56 16l8-4 2 8z" fill="#a8633f" />
    <ellipse cx="42" cy="17" rx="38" ry="8" fill="none" stroke="#f8f8f8" strokeWidth="2" />
  </svg>
);

const dockItems: { name: string; icon: React.ReactNode; running?: boolean; badge?: string }[] = [
  { name: 'finder', icon: <Finder />, running: true },
  { name: 'launchpad', icon: <Launchpad /> },
  { name: 'safari', icon: <Safari /> },
  { name: 'mail', icon: <Mail /> },
  { name: 'contacts', icon: <Contacts /> },
  { name: 'calendar', icon: <Calendar /> },
  { name: 'notes', icon: <Notes /> },
  { name: 'reminders', icon: <Reminders /> },
  { name: 'appstore', icon: <AppStore /> },
  { name: 'prefs', icon: <Prefs />, badge: '1' },
  { name: 'vpn', icon: <AnyConnect />, running: true },
  { name: 'onenote', icon: <OneNote />, running: true },
  { name: 'outlook', icon: <Outlook />, running: true, badge: '1026' },
  { name: 'terminal', icon: <MacTerm />, running: true },
  { name: 'firefox', icon: <Firefox s={98} id="dk" />, running: true },
  { name: 'quick', icon: <Quick /> },
  { name: 'hidden', icon: null, running: true },
  { name: 'vbox', icon: <VBox />, running: true },
  { name: 'eclipse', icon: <Eclipse s={110} id="de" />, running: true },
];

/* ---------- composed parts ---------- */

const Field = ({ name, value, help, span }: { name: string; value: string; help?: string; span: number }) => (
  <Cell $span={span}>
    <Label htmlFor={name}>{name}</Label>
    <Input id={name} defaultValue={value} />
    {help && <Help>{help}</Help>}
  </Cell>
);

const EditorLegend = ({ title }: { title: string }) => (
  <Legend>
    <LegendText>{title}</LegendText>
    <EditorButton>Collapse</EditorButton>
    <EditorButton $square>Edit JSON</EditorButton>
    <EditorButton $square>Object Properties</EditorButton>
  </Legend>
);

const GroupPicker = ({ id, value }: { id: string; value: string }) => (
  <Cell $span={3}>
    <GroupWrap>
      <GroupSelect id={id} aria-label={id}>
        <option>{value}</option>
      </GroupSelect>
      <GroupArrow>
        <Glyph s={30} w={4} d="M4 8l8 8 8-8" />
      </GroupArrow>
    </GroupWrap>
  </Cell>
);

const PolicyModal = () => (
  <Backdrop>
    <Modal role="dialog" aria-label="Edit the policy">
      <ModalHead>
        <ModalTitle>Edit the policy</ModalTitle>
        <CloseMark>×</CloseMark>
      </ModalHead>
      <ModalBody>
        <EditorLegend title="onap.policies.controlloop.guard.common.FrequencyLimiter" />
        <Intro>Supports limiting the frequency of actions being taken by a Actor.</Intro>
        <Well>
          <Row>
            <Field span={4} name="id" value="LOOP_vLB-Test" help="The Control Loop id this applies to." />
            <Field span={4} name="actor" value="SO" help="Specifies the Actor the guard applies to." />
            <Field span={4} name="operation" value="VF Module Create" help="Specified the operation that the actor is performing the guard applies to." />
            <Cell $span={6}>
              <EditorLegend title="tosca.datatypes.TimeInterval" />
              <Well $nested>
                <Row $cols={2}>
                  <Field span={1} name="start_time" value="00:00:00Z" />
                  <Field span={1} name="end_time" value="23:59:59Z" />
                </Row>
              </Well>
            </Cell>
            <Field span={2} name="limit" value="1" help="The limit" />
            <Field span={2} name="timeWindow" value="10" help="The time window to count the actions against." />
            <Cell $span={2}>
              <Label htmlFor="timeUnits">timeUnits</Label>
              <UnitWrap>
                <UnitSelect id="timeUnits">
                  <option>minute</option>
                </UnitSelect>
                <UnitArrow>
                  <Caret w={12} c="#000" />
                </UnitArrow>
              </UnitWrap>
              <Help>The units of time the window is counting.</Help>
            </Cell>
          </Row>
        </Well>
        <GroupRow>
          <Cell $span={2}>
            <GroupLabel htmlFor="pdpGroup">Pdp Group Info</GroupLabel>
          </Cell>
          <GroupPicker id="pdpGroup" value="defaultGroup" />
          <GroupPicker id="pdpSubgroup" value="xacml" />
        </GroupRow>
      </ModalBody>
      <ModalFoot>
        <Button>Close</Button>
        <Button $primary>Save Changes</Button>
        <Button $primary>Refresh</Button>
      </ModalFoot>
    </Modal>
  </Backdrop>
);

const ClampPage = () => (
  <Page>
    <Alert>
      Status successfully refreshed
      <AlertClose>×</AlertClose>
    </Alert>
    <PageHead>
      <Brand>
        <Onap />
        <WordMark>
          <span>O</span>NAP
          <small>OPEN NETWORK AUTOMATION PLATFORM</small>
        </WordMark>
      </Brand>
      <User>
        clamp@clamp.onap.org <a href="#logout">(logout)</a>
      </User>
    </PageHead>
    <LoopCard>
      <LoopHead>Loop Viewer - LOOP_vLB-Test</LoopHead>
      <LoopSvg>
        <LoopDiagram />
      </LoopSvg>
      <Panel>
        <PanelTitle>Loop Status: STOPPED</PanelTitle>
        <Table>
          <colgroup><Col $w={900} /><Col /><Col $w={381} /></colgroup>
          <thead>
            <tr><th>Component Name</th><th /><th /></tr>
          </thead>
          <tbody>
            <tr><td>POLICY</td><td /><td /></tr>
            <tr><td>DCAE</td><RightCell>successfully</RightCell><td /></tr>
          </tbody>
        </Table>
      </Panel>
      <Panel>
        <PanelTitle>Loop Logs</PanelTitle>
        <Table>
          <colgroup><Col $w={376} /><Col /></colgroup>
          <thead>
            <tr><th>Date</th><th>Type</th></tr>
          </thead>
          <tbody>
            <tr><td>2020-04-16T19:03:34Z</td><td>INFO</td></tr>
            <tr><td>2020-04-16T19:03:34Z</td><td>INFO</td></tr>
            <tr><td /><td /></tr>
          </tbody>
        </Table>
      </Panel>
    </LoopCard>
  </Page>
);

export default function App() {
  return (
    <Desktop>
      <Global />
      <MenuBar>
        <MenuGroup>
          <Apple />
          <MenuItem $bold>VirtualBox VM</MenuItem>
          {['Machine', 'View', 'Input', 'Devices', 'Window', 'Help'].map(m => (
            <MenuItem key={m}>{m}</MenuItem>
          ))}
        </MenuGroup>
        <TrayGroup $gap={42}>
          <TrayGroup $gap={22}>
            <TrayGroup $gap={18}>
              <Tray />
            </TrayGroup>
            <TrayGroup $gap={26}>
              <Glyph s={40} w={1.5}><path d="M6 17H2V4h20v13h-4" /><path d="M12 13l6 8H6z" fill="currentColor" /></Glyph>
              <Glyph s={42} w={1.5}><path d="M5 8a9 9 0 1 1-1 6" /><path d="M1 9l3 5 4-4z" fill="currentColor" /><path d="M13 6v6l3 4" /></Glyph>
              <Glyph s={42} w={1.8}><path d="M1 9q11-10 22 0M5 13q7-7 14 0M8.500 17q3.500-3 7 0" /><circle cx="12" cy="20" r="1" fill="currentColor" /></Glyph>
              <Battery>
                100%
                <svg width="44" height="26" viewBox="0 0 44 26"><rect x="1" y="1" width="38" height="24" rx="4" fill="none" stroke="#1d2a36" strokeWidth="2" /><rect x="4" y="4" width="32" height="18" rx="2" fill="#1d2a36" /><path d="M23 1l-11 13h7l-3 11 12-14h-7z" fill="#fff" /><path d="M41 8q3 5 0 10z" fill="#1d2a36" /></svg>
              </Battery>
            </TrayGroup>
          </TrayGroup>
          <MenuItem>Thu 3:55 PM</MenuItem>
          <TrayGroup $gap={27}>
            <Glyph s={36} w={1.8}><circle cx="10" cy="9" r="7" /><path d="M15 15l7 7" /></Glyph>
            <svg width="38" height="24" viewBox="0 0 38 24" fill="#1d2a36"><path d="M0 0h5v4H0zM9 0h29v4H9zM0 10h5v4H0zM9 10h23v4H9zM0 20h5v4H0zM9 20h29v4H9z" /></svg>
          </TrayGroup>
        </TrayGroup>
      </MenuBar>

      <VmWindow>
        <VmTitle>
          <Lights>
            <Light $c="#ee6a5f" aria-label="Close window" />
            <Light $c="#f5bd4f" aria-label="Minimise window" />
            <Light $c="#61c454" aria-label="Zoom window" />
          </Lights>
          <span>Ubuntu 18.04.2 [Running]</span>
        </VmTitle>
        <Guest>
          <GnomeBar>
            <GnomeLeft>
              <span>Activities</span>
              <AppMenu>
                <Firefox s={34} id="tb" />
                Firefox Web Browser
                <Caret w={18} c="#cfcdc8" />
              </AppMenu>
            </GnomeLeft>
            <span>Thu 15:55</span>
            <GnomeRight>
              <svg width="32" height="32" viewBox="0 0 32 32"><path fill="#84827b" d="M0 21h10v10H0zM22 21h10v10H22zM11 1h10v5H11z" /><path d="M12 13q0-4 4-4t4 4q0 3-4 5v4M16 26v3" fill="none" stroke="#dcdad5" strokeWidth="3" /></svg>
              <svg width="28" height="32" viewBox="0 0 28 32" fill="#dcdad5"><path d="M7 21V10q0-8 7-9 7 1 7 9v11zM12 21h4v5h8v4H4v-4h8z" /></svg>
              <Glyph s={34} w={2.5}><path d="M2 8h4l5-5v18l-5-5H2z" fill="currentColor" /><path d="M15 7q3 5 0 10M19 4q5 8 0 16" /></Glyph>
              <svg width="26" height="34" viewBox="0 0 26 34"><path d="M3 6h6V2h8v4h6v26H3z" fill="none" stroke="#aaa8a0" strokeWidth="3" /><path d="M15 10l-7 10h5l-2 8 7-10h-5z" fill="#fff" /></svg>
              <Caret w={18} c="#cfcdc8" />
            </GnomeRight>
          </GnomeBar>
          <GuestBody>
            <Launcher>
              <LaunchItem $active aria-label="Firefox"><Firefox s={70} id="ln" /></LaunchItem>
              <LaunchItem aria-label="Files"><Files /></LaunchItem>
              <LaunchItem aria-label="Software"><Software /></LaunchItem>
              <LaunchItem aria-label="Terminal"><UbuntuTerm /></LaunchItem>
              <LaunchItem aria-label="Eclipse"><Eclipse s={72} id="le" /></LaunchItem>
              <LaunchItem aria-label="MySQL Workbench"><Mysql /></LaunchItem>
              <LaunchItem aria-label="Postman"><Postman /></LaunchItem>
              <LaunchGrid aria-label="Show applications"><AppGrid /></LaunchGrid>
            </Launcher>
            <Browser>
              <BrowserTitle>
                <i />
                <span>Clamp Designer UI - Mozilla Firefox</span>
                <WinButtons>
                  <WinButton aria-label="Minimise"><Glyph s={22} w={2.5} d="M5 12h14" /></WinButton>
                  <WinButton aria-label="Maximise"><Glyph s={22} w={2.5} d="M5 6h14v12H5z" /></WinButton>
                  <WinButton $close aria-label="Close"><Glyph s={22} w={2.5} d="M6 6l12 12M18 6L6 18" /></WinButton>
                </WinButtons>
              </BrowserTitle>
              <TabStrip>
                <Tab>
                  Clamp Designer UI
                  <IconButton aria-label="Close tab"><Glyph s={22} w={3} d="M3 3l18 18M21 3L3 21" /></IconButton>
                </Tab>
                <NewTab aria-label="New tab"><Glyph s={32} w={2.2} d="M12 2v20M2 12h20" /></NewTab>
              </TabStrip>
              <NavBar>
                <NavButtons>
                  <BackButton aria-label="Back"><Glyph s={38} w={2.4} d="M21 12H4M11 4l-8 8 8 8" /></BackButton>
                  <IconButton aria-label="Forward"><Glyph s={34} w={2.2}><path d="M2 12h18M13 4l8 8-8 8" stroke="#bbb9b6" /></Glyph></IconButton>
                  <IconButton aria-label="Reload"><Glyph s={32} w={2.8}><path d="M20 15a8.500 8.500 0 1 1-1-8" /><path d="M21 2v8h-8z" fill="currentColor" strokeWidth="1" /></Glyph></IconButton>
                  <IconButton aria-label="Home"><Glyph s={34} w={2.6}><path d="M2 12L12 2l10 10M5 11v11h14V11" /><path d="M12 14v7" strokeWidth="4" /></Glyph></IconButton>
                </NavButtons>
                <UrlBar>
                  <Glyph s={30} w={2.6}><path d="M12 1l9 3c0 9-2 15-9 19C5 19 3 13 3 4z" /><path d="M12 7v10" /></Glyph>
                  <Split $h={44} />
                  <svg width="36" height="36" viewBox="0 0 36 36"><path d="M9 15V9a6 6 0 0 1 12 0v6" fill="none" stroke="#8a8886" strokeWidth="4" /><rect x="4" y="14" width="18" height="16" rx="2" fill="#8a8886" /><path d="M23 14l11 20H12z" fill="#f9b500" stroke="#fff" /><path d="M23 21v6M23 29v2" stroke="#fff" strokeWidth="2.500" /></svg>
                  <Url>https://<b>10.12.6.116</b>:30258</Url>
                  <UrlActions>
                    <svg width="34" height="10" viewBox="0 0 34 10" fill="#807e7c"><circle cx="5" cy="5" r="4" /><circle cx="17" cy="5" r="4" /><circle cx="29" cy="5" r="4" /></svg>
                    <Glyph s={34} w={2.6} d="M2 3h20v8q-1 10-10 11Q3 21 2 11zM7 9l5 5 5-5" />
                    <Glyph s={36} w={2.4} d="M12 1.500l3 7 7.500 1-5.500 5 1.500 8L12 19l-6.500 3.500 1.500-8-5.500-5 7.500-1z" />
                  </UrlActions>
                </UrlBar>
                <ToolButtons>
                  <IconButton aria-label="Library"><Glyph s={34} w={2.4} d="M2 3v19M7 3v19M12 3v19M16 4l6 18" /></IconButton>
                  <IconButton aria-label="Sidebars"><Glyph s={34} w={2.4} d="M3 3h18v18H3zM11 3v18M6 7h1M6 11h1M6 15h1" /></IconButton>
                  <IconButton aria-label="Account"><Glyph s={32} w={2}><circle cx="12" cy="12" r="10.500" /><circle cx="12" cy="9" r="4" fill="currentColor" /><path d="M6 17q6-4 12 0-6 5-12 0z" fill="currentColor" /></Glyph></IconButton>
                  <Split $h={68} $pull />
                  <IconButton aria-label="What's new">
                    <svg width="40" height="40" viewBox="0 0 40 40" fill="#666461"><path d="M5 15h13v8H5zM20 15h13v8H20zM6 25h12v13H6zM20 25h12v13H20zM14 6l5 3 5-3v8H14z" /><circle cx="33" cy="7" r="6" fill="#0ab0fb" /></svg>
                  </IconButton>
                  <IconButton aria-label="Menu"><Glyph s={30} w={3} d="M3 4h18M3 12h18M3 20h18" /></IconButton>
                </ToolButtons>
              </NavBar>
              <Content>
                <ClampPage />
                <ScrollTrack />
                <PolicyModal />
              </Content>
            </Browser>
          </GuestBody>
        </Guest>
        <StatusBar>
          <StatusIcons />
          <span>Left ⌘</span>
        </StatusBar>
      </VmWindow>

      <DockArea>
        <Dock>
          {dockItems.map(it => (
            <DockItem key={it.name} $running={it.running}>
              {it.icon}
              {it.badge && <Badge>{it.badge}</Badge>}
            </DockItem>
          ))}
          <DockSplit />
          <DockItem>
            <Trash />
          </DockItem>
        </Dock>
      </DockArea>
    </Desktop>
  );
}
